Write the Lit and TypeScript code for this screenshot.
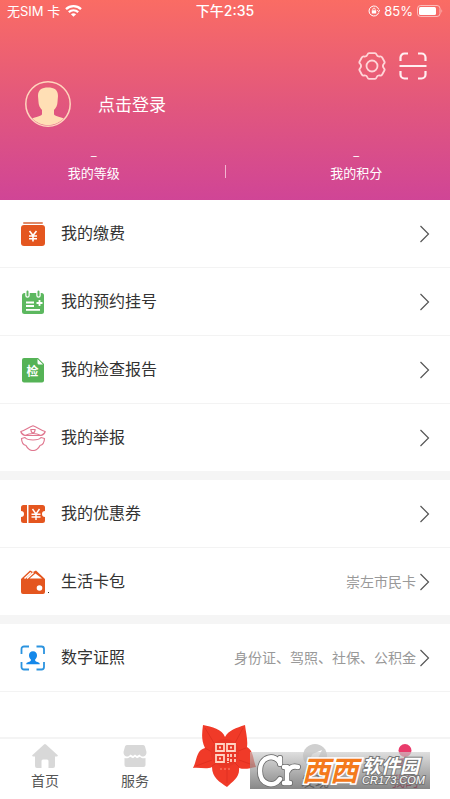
import { LitElement, html, css, svg, nothing } from "lit";
import { customElement, property } from "lit/decorators.js";

const icons: Record<string, unknown> = {
  pay: svg`<rect x="3" y="1" width="20" height="2" rx="1" fill="#e08a68"/><rect x="1" y="4" width="24" height="21" rx="3" fill="#e4561f"/>
    <path d="M9.5 10l3.5 4.5 3.500-4.500M9 15h8M9 17.700h8M13 14.500v6" fill="none" stroke="#fff" stroke-width="1.600"/>`,
  booking: svg`<rect x="2" y="4" width="22" height="21" rx="2.500" fill="#5cb85f"/>
    <path d="M7.500 2.500v4M18.500 2.500v4" stroke="#fff" stroke-width="4.500" stroke-linecap="round"/>
    <path d="M7.500 2.500v4M18.500 2.500v4" stroke="#5cb85f" stroke-width="2" stroke-linecap="round"/>
    <path d="M6 13.500h8M6 17h8M6 20.800h14M16.500 14h6M19.500 11v6" stroke="#fff" stroke-width="1.800"/>`,
  report: svg`<path d="M4 1h14l6 6v16.500a2 2 0 0 1-2 2H4a2 2 0 0 1-2-2V3a2 2 0 0 1 2-2z" fill="#55b356"/>
    <path d="M17.500 2l5.500 5.500h-4a1.500 1.500 0 0 1-1.500-1.500z" fill="#fff"/><text x="12.500" y="19" text-anchor="middle" font-size="12" font-weight="700" fill="#fff">检</text>`,
  police: svg`<g fill="none" stroke="#e07890" stroke-width="1.200" stroke-linejoin="round"><path d="M.8 6.500C5 5.500 9 2 13 .8c4 1.200 8 4.700 12.200 5.700-.5 2-2 3.300-4.200 4H5C3 9.800 1.300 8.500.8 6.500z"/>
    <path d="M5 10.500c5-2.500 11-2.500 16 0M10.800 4.500h4.400l-.7 2.500-1.500 1.300L11.500 7z"/>
    <path d="M5 12.500L1.500 13.500c.2 4 1.700 6.500 4.500 7 1.500 3 4 5 7 5s5.500-2 7-5c2.800-.5 4.300-3 4.500-7L21 12.500c-1.500 2-3.500 2.500-8 2.500s-6.500-.5-8-2.500z"/></g>`,
  coupon: svg`<path d="M3.500 4H7v18H3.500A2.500 2.500 0 0 1 1 19.500V16a3 3 0 0 0 0-6V6.500A2.500 2.500 0 0 1 3.500 4zM8.500 4h14A2.500 2.500 0 0 1 25 6.500V10a3 3 0 0 0 0 6v3.500a2.500 2.500 0 0 1-2.500 2.500h-14z" fill="#e4561f"/>
    <path d="M12.500 8l3.500 5 3.500-5M11.500 13.300h9M11.500 16h9M16 13v6" fill="none" stroke="#fff" stroke-width="1.400"/>`,
  wallet: svg`<path d="M1 10L10 1.500l3 1.500 3-1.500 9 8.500v13a2 2 0 0 1-2 2H3a2 2 0 0 1-2-2z" fill="#e4561f"/><path d="M4.500 9.500l6.500-6M13.500 3.500L7 9.500" stroke="#fff" stroke-width="1.500"/><path d="M9.500 9.500l6-5 6.500 5z" fill="#fff"/><circle cx="19.500" cy="19" r="2.800" fill="#fff"/>`,
  cert: svg`<path d="M1.500 9V4a2.500 2.500 0 0 1 2.500-2.500h5M16.500 1.500h5A2.500 2.500 0 0 1 24 4v5M24 17v5a2.500 2.500 0 0 1-2.500 2.500h-5M9 24.500H4A2.500 2.500 0 0 1 1.500 22v-5" fill="none" stroke="#2b93df" stroke-width="1.800"/>
    <path d="M13 6.300c2.600 0 4 1.700 4 4 0 2-.8 3.400-2 4.400.2 1.400 1 1.900 2.500 2.300 1.600.5 2.200 1 2.300 2.300H6.200c.1-1.300.7-1.800 2.300-2.300 1.500-.4 2.300-.9 2.500-2.300-1.200-1-2-2.400-2-4.400 0-2.300 1.400-4 4-4z" fill="#1488ea"/>`,
  home: svg`<path d="M12 1.500c.7-.7 1.300-.7 2 0L25.500 12c.6.700.3 1.500-.7 1.500H23V23a2 2 0 0 1-2 2h-4.500v-7a1.500 1.500 0 0 0-1.500-1.500h-4A1.500 1.500 0 0 0 9.500 18v7H5a2 2 0 0 1-2-2v-9.500H1.200c-1 0-1.300-.8-.7-1.500z" fill="#d8d8d8"/>`,
  service: svg`<path d="M5 2h16a2 2 0 0 1 2 1.500l1.500 5.500c0 2.500-1 4-3 4.500-1.500.3-3-.5-4-2L15 13l-2-1.500-2 1.500-2.500-1.500c-1 1.500-2.500 2.300-4 2-2-.5-3-2-3-4.500L3 3.500A2 2 0 0 1 5 2z" fill="#d8d8d8"/>
    <path d="M2.500 15c2.500.7 4 0 5.500-1.300l3 1.500 2-1.500 2 1.500 3-1.500c1.500 1.300 3 2 5.500 1.300v7a2 2 0 0 1-2 2h-17a2 2 0 0 1-2-2z" fill="#d8d8d8"/>`,
  discover: svg`<circle cx="13" cy="13" r="12" fill="#d0d0d0"/><path d="M20 7l-4.500 9L6 20l4.500-9z" fill="#fff"/>`,
  mine: svg`<circle cx="13" cy="7.500" r="6.500" fill="#e93b6b"/><path d="M2 25c0-7 4-10 11-10s11 3 11 10z" fill="#e93b6b"/>`,
};

const icon = (name: string) => html`<svg width="26" height="26" viewBox="0 0 26 26" aria-hidden="true">${icons[name]}</svg>`;

@customElement("menu-row")
class MenuRow extends LitElement {
  @property() icon = "";
  @property() label = "";
  @property() note = "";
  @property({ type: Boolean }) dot = false;

  static styles = css`
    :host { display: block; border-bottom: 1px solid #f3f3f3; }
    :host(:last-child) { border-bottom: 0; }
    .row {
      display: flex; align-items: center; width: 100%; height: 67px; padding: 0 20px;
      border: 0; background: #fff; color: #333; font: 16px/24px "Noto Sans CJK SC", sans-serif; text-align: left;
    }
    .mark { position: relative; display: flex; margin-right: 15px; }
    .dot { position: absolute; right: -3px; bottom: 2px; width: 1px; height: 1px; background: #333; }
    .label { flex: 1; padding-bottom: 3px; }
    .note { color: #999; font-size: 14px; margin-right: 3px; padding-bottom: 2px; }
  `;

  render() {
    return html`<button class="row">
      <span class="mark">${icon(this.icon)}${this.dot ? html`<span class="dot"></span>` : nothing}</span>
      <span class="label">${this.label}</span>
      <span class="note">${this.note}</span>
      <svg width="11" height="18" viewBox="0 0 11 18" aria-hidden="true"><path d="M1.500 1l8 8-8 8" fill="none" stroke="#555" stroke-width="1.200"/></svg>
    </button>`;
  }
}

const groups = [
  [
    { icon: "pay", label: "我的缴费" },
    { icon: "booking", label: "我的预约挂号" },
    { icon: "report", label: "我的检查报告" },
    { icon: "police", label: "我的举报" },
  ],
  [
    { icon: "coupon", label: "我的优惠券" },
    { icon: "wallet", label: "生活卡包", note: "崇左市民卡", dot: true },
  ],
  [{ icon: "cert", label: "数字证照", note: "身份证、驾照、社保、公积金" }],
];

@customElement("app-root")
class AppRoot extends LitElement {
  static styles = css`
    :host {
      display: flex; flex-direction: column; min-height: 100vh; background: #fff; color: #333;
      font: 14px/20px "Noto Sans CJK SC", sans-serif;
    }
    * { box-sizing: border-box; }
    button { padding: 0; border: 0; background: none; color: inherit; font: inherit; }
    svg { display: block; }
    .head { color: #fff; background: linear-gradient(#fa6c64, #e2577d 52%, #d04596); padding-bottom: 17px; }
    .status {
      display: grid; grid-template-columns: 1fr auto 1fr; align-items: center; height: 22px; padding: 0 7px;
      font: 13px/20px "Inter", "Noto Sans CJK SC", sans-serif;
    }
    .side { display: flex; align-items: center; gap: 5px; }
    .end { justify-content: flex-end; gap: 4px; }
    .time { font-size: 14px; font-weight: 500; }
    .tools { display: flex; justify-content: flex-end; gap: 13px; padding: 30px 23px 0; }
    .profile { display: flex; align-items: center; gap: 27px; width: 100%; padding: 1px 25px 0; font-size: 17px; }
    .stats { display: grid; grid-template-columns: 5fr 2fr 5fr; align-items: end; padding-top: 20px; text-align: center; font-size: 13px; }
    .value { display: block; line-height: 16px; }
    .bar { justify-self: center; width: 1px; height: 13px; margin-bottom: 5px; background: #f3b5d0; }
    .groups { display: flex; flex-direction: column; gap: 9px; background: #f5f5f5; border-bottom: 1px solid #f3f3f3; }
    .tabs { position: relative; display: grid; grid-template-columns: repeat(5, 1fr); margin-top: auto; height: 62px; border-top: 2px solid #f4f4f4; }
    .tab { display: flex; flex-direction: column; align-items: center; gap: 1px; padding-top: 4px; color: #555; text-decoration: none; }
    .active { color: #e93b6b; }
    .scan { display: flex; justify-content: center; align-items: flex-start; }
    .flower { margin-top: -16px; flex: none; }
    .brand {
      position: absolute; right: 20px; bottom: 10px; display: flex; align-items: center; width: 180px; height: 37px; padding-left: 6px;
      background: linear-gradient(rgba(205, 205, 205, .65), rgba(85, 85, 85, .7)); white-space: nowrap;
    }
    .orange, .site { paint-order: stroke fill; font-style: italic; font-weight: 700; }
    .orange { align-self: flex-start; color: #f47a1c; font-size: 28px; line-height: 34px; -webkit-text-stroke: 3px #fff; }
    .site { display: flex; flex-direction: column; margin-left: 4px; color: #fff; -webkit-text-stroke: 2px #777; }
    .name { font-size: 19px; line-height: 19px; }
    .url { font: italic 400 11px/12px "Liberation Sans", sans-serif; }
  `;

  render() {
    return html`
      <header class="head">
        <div class="status">
          <span class="side">无SIM 卡
            <svg width="17" height="12" viewBox="0 0 17 12" aria-label="Wi-Fi"><g fill="none" stroke="#fff" stroke-width="2.300"><path d="M1 4.200c4.300-4 10.700-4 15 0M3.800 7.200c2.700-2.500 6.700-2.500 9.400 0"/></g><path d="M8.500 11.800L5.900 9.200c1.500-1.300 3.700-1.300 5.200 0z" fill="#fff"/></svg>
          </span>
          <span class="time">下午2:35</span>
          <span class="side end">
            <svg width="12" height="12" viewBox="0 0 12 12" aria-hidden="true"><path d="M10.800 4.500A5 5 0 1 0 10.800 7.500M9.300 5.200l1.500 1.500 1.200-1.700" fill="none" stroke="#fff" stroke-width="1"/><rect x="3.800" y="5.300" width="4.400" height="3.200" fill="#fff"/><path d="M4.800 5.500V4.300a1.200 1.200 0 0 1 2.400 0v1.200" fill="none" stroke="#fff" stroke-width=".8"/></svg>
            <span>85%</span>
            <svg width="26" height="12" viewBox="0 0 26 12" aria-hidden="true"><rect x=".5" y=".5" width="22.500" height="11" rx="3" fill="none" stroke="#fff" stroke-opacity=".55"/><rect x="2" y="2" width="17" height="8" rx="1.500" fill="#fff"/><path d="M24.500 4v4q1.500-2 0-4z" fill="#fff" opacity=".6"/></svg>
          </span>
        </div>
        <div class="tools">
          <button aria-label="设置"><svg width="28" height="28" viewBox="0 0 28 28" fill="none" stroke="#ffd5d8" stroke-width="1.800" stroke-linejoin="round"><path d="M11 1.200h6q1 0 1.500 1.300c.5 1.500 1.700 2.200 3.200 2 1.200-.2 2 .1 2.500 1l2.300 4.200c.4.800.2 1.300-.5 2-1.300 1.400-1.300 3.200 0 4.600.7.700.9 1.200.5 2l-2.300 4.200c-.5.900-1.300 1.200-2.500 1-1.500-.2-2.700.5-3.200 2q-.5 1.300-1.500 1.300h-6q-1 0-1.500-1.300c-.5-1.500-1.700-2.200-3.200-2-1.200.2-2-.1-2.500-1l-2.300-4.200c-.4-.8-.2-1.300.5-2 1.300-1.400 1.300-3.200 0-4.600-.7-.7-.9-1.200-.5-2l2.300-4.200c.5-.9 1.300-1.200 2.500-1 1.500.2 2.700-.5 3.200-2Q10 1.200 11 1.200z"/><circle cx="14" cy="14" r="5.500"/></svg></button>
          <button aria-label="扫一扫"><svg width="28" height="28" viewBox="0 0 28 28" fill="none" stroke="#fff0f2" stroke-width="2.200"><path d="M1.500 9V5.500a4 4 0 0 1 4-4H9M19 1.500h3.500a4 4 0 0 1 4 4V9M26.500 19v3.500a4 4 0 0 1-4 4H19M9 26.500H5.500a4 4 0 0 1-4-4V19M.5 14h27"/></svg></button>
        </div>
        <button class="profile">
          <svg width="46" height="46" viewBox="0 0 46 46" aria-hidden="true"><path d="M23 6.500c6 0 10 2 10 8.500l-.5 6c0 3-1.500 6-3.500 8v4c0 2 5 2.500 9.800 4.500A22 22 0 0 1 7.200 37.500C12 35.500 17 35 17 33v-4c-2-2-3.500-5-3.500-8l-.5-6c0-6.500 4-8.500 10-8.500z" fill="#ffdfb5"/><circle cx="23" cy="23" r="22.200" fill="none" stroke="#ffd6bd" stroke-width="1.500"/></svg>
          <span>点击登录</span>
        </button>
        <div class="stats">
          <div><span class="value">–</span>我的等级</div>
          <span class="bar"></span>
          <div><span class="value">–</span>我的积分</div>
        </div>
      </header>
      <main class="groups">
        ${groups.map((rows) => html`<section>${rows.map((r: any) => html`<menu-row .icon=${r.icon} .label=${r.label} .note=${r.note ?? ""} .dot=${!!r.dot}></menu-row>`)}</section>`)}
      </main>
      <nav class="tabs">
        <a class="tab" href="#home">${icon("home")}首页</a>
        <a class="tab" href="#service">${icon("service")}服务</a>
        <button class="scan" aria-label="二维码">
          <svg class="flower" width="64" height="66" viewBox="0 0 64 66"><path d="M10 2C19 4 29 6 32 14 36 7 43 5 52 2c1 8 3 15 2 22 7 4 6 13 9 20-6 1-11 3-17 1 1 9-6 13-12 19-7-5-15-9-15-20-6 3-12 0-19 1 4-7 3-18 12-20C8 17 9 10 10 2z" fill="#f03a28"/>
            <path d="M12 5l9 15M50 5l-8 15M3 43l16-6M60 42l-14-5M34 60V46M32 16v5M12 25l7 4M53 25l-8 3M19 43l6-4M46 44l-5-5" stroke="#e03122" fill="none"/><circle cx="32" cy="30" r="14" fill="#e83726"/>
            <g fill="none" stroke="#ffd3c2" stroke-width="1.800"><path d="M23 21h8v7h-8zM34 21h8v7h-8zM23 32h8v7h-8z"/><path d="M35 31v9M38 31v3M42 31v3M38 36v4M42 36v4" stroke-dasharray="3 1"/></g><path d="M26 23.500h2v2h-2zM37 23.500h2v2h-2zM26 34.500h2v2h-2z" fill="#ffd3c2"/><path d="M27 46h11" stroke="#f7907c" stroke-dasharray="2 2"/></svg>
        </button>
        <a class="tab" href="#discover">${icon("discover")}发现</a>
        <a class="tab active" href="#mine">${icon("mine")}我的</a>
        <div class="brand">
          <svg width="46" height="36" viewBox="0 0 46 36" aria-label="Cr"><g fill="none" stroke-linecap="round"><g stroke="#666" stroke-width="6"><path d="M24 10C20 1 4 2 4 18c0 14 14 17 20 8M24 5v6"/><path d="M31 14v16M28 30h6M28 14h3M32 18c2-4 6-5 10-4"/></g><g stroke="#fff" stroke-width="4.500"><path d="M24 10C20 1 4 2 4 18c0 14 14 17 20 8M24 5v6"/><path d="M31 14v16M28 30h6M28 14h3M32 18c2-4 6-5 10-4"/></g></g></svg>
          <span class="orange">西西</span>
          <span class="site"><span class="name">软件园</span><span class="url">CR173.COM</span></span>
        </div>
      </nav>
    `;
  }
}
